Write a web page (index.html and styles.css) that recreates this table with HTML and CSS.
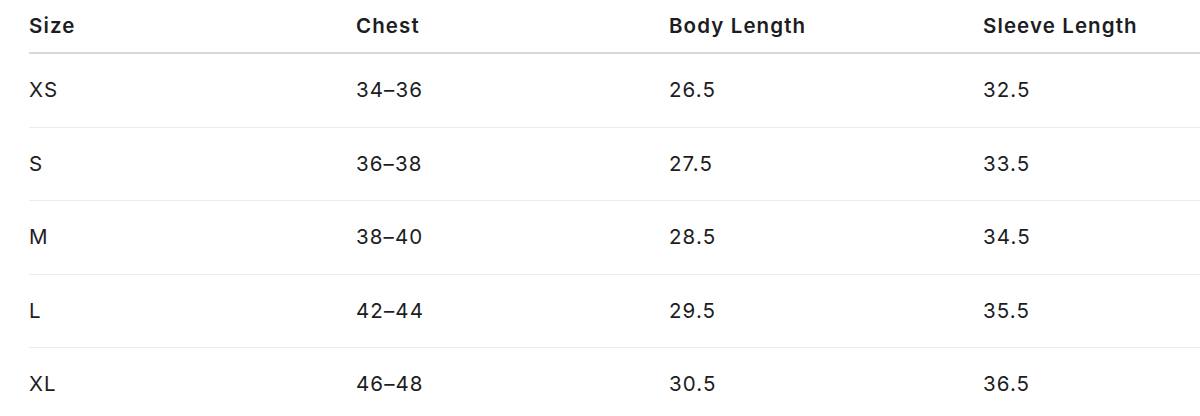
FILE: index.html
```html
<!DOCTYPE html>
<html lang="en">
<head>
<meta charset="utf-8">
<title>Size Guide</title>
<link rel="stylesheet" href="styles.css">
</head>
<body>
<div class="wrap">
<table class="size-table">
  <colgroup>
    <col class="c1"><col class="c2"><col class="c3"><col class="c4">
  </colgroup>
  <thead>
    <tr><th>Size</th><th>Chest</th><th>Body Length</th><th>Sleeve Length</th></tr>
  </thead>
  <tbody>
    <tr><td>XS</td><td>34–36</td><td>26.5</td><td>32.5</td></tr>
    <tr><td>S</td><td>36–38</td><td>27.5</td><td>33.5</td></tr>
    <tr><td>M</td><td>38–40</td><td>28.5</td><td>34.5</td></tr>
    <tr><td>L</td><td>42–44</td><td>29.5</td><td>35.5</td></tr>
    <tr><td>XL</td><td>46–48</td><td>30.5</td><td>36.5</td></tr>
  </tbody>
</table>
</div>
</body>
</html>
```

FILE: styles.css
```css
html, body {
  margin: 0;
  padding: 0;
  background: #ffffff;
  overflow: hidden;
}
.wrap {
  padding-left: 29px;
}
.size-table {
  width: 1171px;
  border-collapse: collapse;
  table-layout: fixed;
  font-family: Inter, "Liberation Sans", sans-serif;
  font-size: 20.5px;
  letter-spacing: 1.1px;
  color: #1d1d1f;
}
.c1 { width: 327px; }
.c2 { width: 313px; }
.c3 { width: 314px; }
.c4 { width: 217px; }
.size-table th {
  text-align: left;
  font-weight: 600;
  line-height: 26px;
  padding: 13px 0;
  border-bottom: 2px solid #d8d8dc;
}
.size-table td {
  text-align: left;
  font-weight: 400;
  line-height: 26px;
  padding: 23.25px 0;
  border-bottom: 1px solid #ebebee;
}
```
